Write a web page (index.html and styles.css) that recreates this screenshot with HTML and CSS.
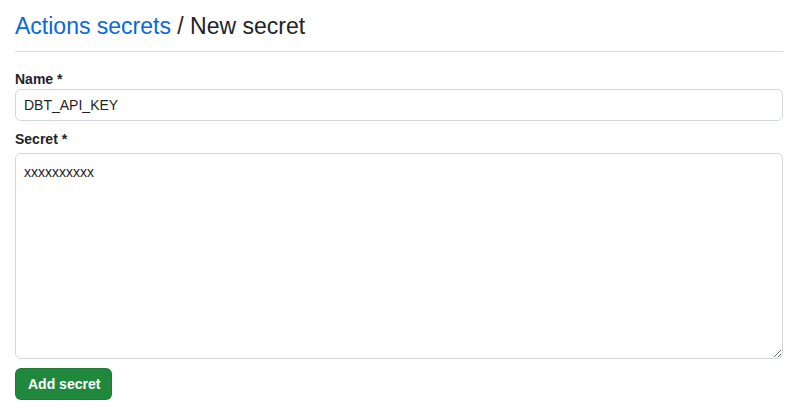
FILE: index.html
```html
<!DOCTYPE html>
<html>
<head>
<meta charset="utf-8">
<link rel="stylesheet" href="styles.css">
</head>
<body>
<div class="page">
  <div class="subhead">
    <h2 class="subhead-heading"><a href="#" class="crumb">Actions secrets</a> / New secret</h2>
  </div>
  <form class="form">
    <label class="label label-name" for="name">Name *</label>
    <input id="name" class="input" type="text" value="DBT_API_KEY">
    <label class="label label-secret" for="secret">Secret *</label>
    <textarea id="secret" class="textarea">xxxxxxxxxx</textarea>
    <button type="button" class="btn">Add secret</button>
  </form>
</div>
</body>
</html>
```
FILE: styles.css
```css
* { box-sizing: border-box; }
html, body { margin: 0; padding: 0; background: #ffffff; }
body {
  font-family: "Liberation Sans", Arial, sans-serif;
  color: #1f2328;
  font-size: 14px;
}
.page {
  padding: 8px 18px 0 15px;
}
.subhead {
  padding-bottom: 7px;
  border-bottom: 1px solid #d8dee4;
}
.subhead-heading {
  margin: 0;
  font-size: 23px;
  line-height: 36px;
  font-weight: 400;
  color: #1f2328;
}
.crumb {
  color: #0969da;
  text-decoration: none;
}
.form {
  display: flex;
  flex-direction: column;
  align-items: flex-start;
}
.label {
  display: block;
  font-weight: 600;
  font-size: 14px;
  line-height: 20px;
}
.label-name { margin-top: 17px; }
.label-secret { margin-top: 8px; margin-bottom: 4px; }
.input, .textarea {
  width: 100%;
  font-family: inherit;
  font-size: 14px;
  line-height: 20px;
  color: #1f2328;
  border: 1px solid #d0d7de;
  border-radius: 6px;
  padding: 5px 8px;
  background: #ffffff;
  outline: none;
}
.input { height: 32px; }
.textarea {
  height: 206px;
  padding: 8px 8px;
  resize: vertical;
  display: block;
}
.btn {
  margin-top: 9px;
  height: 32px;
  padding: 0 11px 0 12px;
  font-family: inherit;
  font-size: 14px;
  font-weight: 600;
  color: #ffffff;
  background: #1f883d;
  border: 1px solid rgba(31, 35, 40, 0.15);
  border-radius: 6px;
  cursor: pointer;
}
```
